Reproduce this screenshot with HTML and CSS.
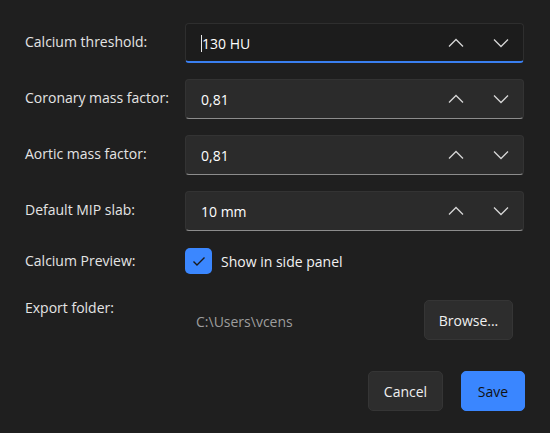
FILE: index.html
```html
<!DOCTYPE html>
<html lang="en">

<head>
    <meta charset="UTF-8">
    <meta name="viewport" content="width=device-width, initial-scale=1.0">
    <title>Settings</title>
    <link rel="stylesheet" href="styles.css">
</head>

<body>
    <div class="settings">
        <div class="form-grid">
            <!-- Number boxes -->
            <label class="field-label">Calcium threshold:</label>
            <div class="number-box focused">
                <span class="value"><span class="caret"></span>130 HU</span>
                <span class="spin">
                    <svg width="16" height="10" viewBox="0 0 16 10"><path d="M1 8.5 L8 1.5 L15 8.5" /></svg>
                    <svg width="16" height="10" viewBox="0 0 16 10"><path d="M1 1.5 L8 8.5 L15 1.5" /></svg>
                </span>
            </div>

            <label class="field-label">Coronary mass factor:</label>
            <div class="number-box">
                <span class="value">0,81</span>
                <span class="spin">
                    <svg width="16" height="10" viewBox="0 0 16 10"><path d="M1 8.5 L8 1.5 L15 8.5" /></svg>
                    <svg width="16" height="10" viewBox="0 0 16 10"><path d="M1 1.5 L8 8.5 L15 1.5" /></svg>
                </span>
            </div>

            <label class="field-label">Aortic mass factor:</label>
            <div class="number-box">
                <span class="value">0,81</span>
                <span class="spin">
                    <svg width="16" height="10" viewBox="0 0 16 10"><path d="M1 8.5 L8 1.5 L15 8.5" /></svg>
                    <svg width="16" height="10" viewBox="0 0 16 10"><path d="M1 1.5 L8 8.5 L15 1.5" /></svg>
                </span>
            </div>

            <label class="field-label">Default MIP slab:</label>
            <div class="number-box">
                <span class="value">10 mm</span>
                <span class="spin">
                    <svg width="16" height="10" viewBox="0 0 16 10"><path d="M1 8.5 L8 1.5 L15 8.5" /></svg>
                    <svg width="16" height="10" viewBox="0 0 16 10"><path d="M1 1.5 L8 8.5 L15 1.5" /></svg>
                </span>
            </div>

            <!-- Checkbox -->
            <label class="field-label check-label">Calcium Preview:</label>
            <div class="check-row">
                <span class="checkbox">
                    <svg width="16" height="16" viewBox="0 0 16 16"><path d="M2.5 8.5 L6 12 L13.5 4.5" /></svg>
                </span>
                <span>Show in side panel</span>
            </div>

            <!-- Export folder -->
            <label class="field-label export-label">Export folder:</label>
            <div class="export-row">
                <span class="path">C:\Users\vcens</span>
                <button class="btn browse">Browse...</button>
            </div>
        </div>

        <div class="footer">
            <button class="btn">Cancel</button>
            <button class="btn primary">Save</button>
        </div>
    </div>
</body>

</html>
```

FILE: styles.css
```css
/* Global Styles */
body {
    margin: 0;
    padding: 0;
    background-color: #1f1f1f;
    color: #e8e8e8;
    font-family: "Open Sans", "Noto Sans", sans-serif;
    font-size: 14px;
}

.settings {
    width: 500px;
    padding: 23px 25px 0 25px;
}

/* Form */
.form-grid {
    display: grid;
    grid-template-columns: 160px 339px;
    row-gap: 16px;
}

.field-label {
    padding-top: 9px;
    line-height: 20px;
    color: #e4e4e4;
}

.check-label {
    padding-top: 4px;
}

.export-label {
    padding-top: 2px;
    margin-top: 6px;
}

/* Number box */
.number-box {
    box-sizing: border-box;
    height: 40px;
    display: flex;
    align-items: center;
    justify-content: space-between;
    background-color: #2b2b2b;
    border: 1px solid #333333;
    border-bottom: 1px solid #8c8c8c;
    border-radius: 4px;
    padding: 0 15px;
}

.number-box.focused {
    background-color: #1c1c1c;
    border-color: #2e2e2e;
    border-bottom: 2px solid #3a7ff0;
    padding-top: 1px;
}

.value {
    color: #ffffff;
    font-size: 14px;
    display: flex;
    align-items: center;
}

.caret {
    width: 1px;
    height: 17px;
    background-color: #e8e8e8;
}

.spin {
    display: flex;
    gap: 29px;
    margin-right: -1px;
}

.spin svg path {
    fill: none;
    stroke: #d6d6d6;
    stroke-width: 1.3;
}

/* Checkbox */
.check-row {
    display: flex;
    align-items: center;
    gap: 9px;
    height: 26px;
    margin-top: 1px;
    color: #f2f2f2;
}

.checkbox {
    box-sizing: border-box;
    width: 27px;
    height: 26px;
    border-radius: 5px;
    background-color: #3b87ff;
    display: flex;
    align-items: center;
    justify-content: center;
}

.checkbox path {
    fill: none;
    stroke: #1a1a1a;
    stroke-width: 1.4;
}

/* Export */
.export-row {
    display: flex;
    align-items: center;
    justify-content: space-between;
    padding: 0 11px;
    margin-top: 10px;
}

.path {
    color: #9d9d9d;
    padding-top: 3px;
}

/* Buttons */
.btn {
    box-sizing: border-box;
    height: 40px;
    padding: 0 12px;
    background-color: #2d2d2d;
    border: 1px solid #353535;
    border-radius: 5px;
    color: #f0f0f0;
    font-family: "Open Sans", "Noto Sans", sans-serif;
    font-size: 14px;
}

.browse {
    width: 89px;
}

.footer {
    display: flex;
    justify-content: flex-end;
    gap: 18px;
    margin-top: 31px;
}

.footer .btn {
    width: 75px;
}

.footer .primary {
    width: 64px;
    background-color: #3a86ff;
    border-color: #3a86ff;
    color: #111111;
}
```
